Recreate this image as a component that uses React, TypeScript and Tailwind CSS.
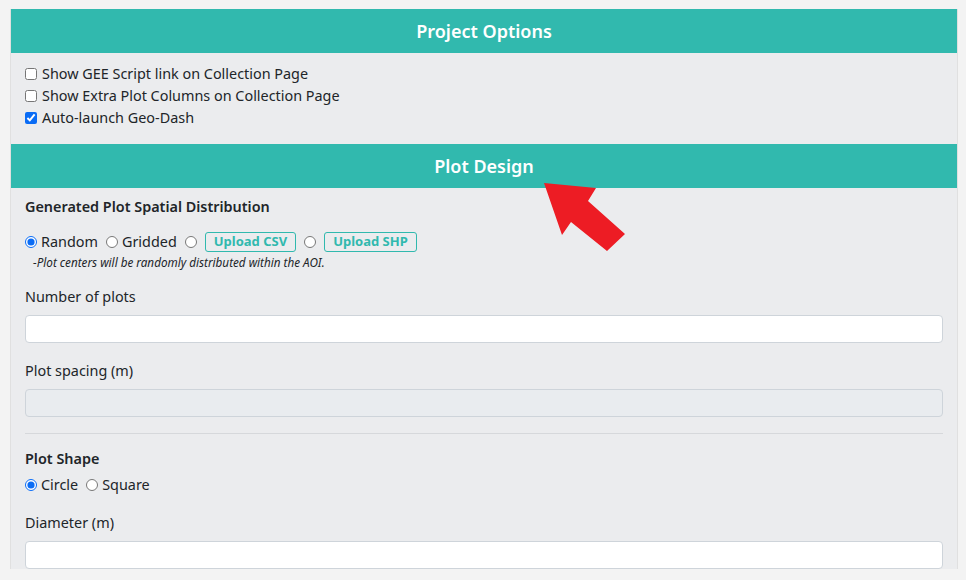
import React from "react";

const font = { fontFamily: '"Noto Sans", "Open Sans", sans-serif' };

function SectionHeader({ title }: { title: string }) {
  return (
    <div className="flex h-[44px] items-center justify-center bg-[#31b9ae] text-[18px] font-semibold text-white">
      {title}
    </div>
  );
}

function Check({ label, checked = false }: { label: string; checked?: boolean }) {
  return (
    <label className="flex h-[22px] items-center gap-[5px]">
      <input type="checkbox" defaultChecked={checked} className="m-0 h-[12px] w-[12px] accent-[#0a6cf5]" />
      <span>{label}</span>
    </label>
  );
}

function Radio({ name, checked = false, children }: { name: string; checked?: boolean; children?: React.ReactNode }) {
  return (
    <label className="flex items-center gap-[4px]">
      <input type="radio" name={name} defaultChecked={checked} className="m-0 h-[12px] w-[12px] accent-[#0a6cf5]" />
      {children}
    </label>
  );
}

function UploadButton({ label }: { label: string }) {
  return (
    <span className="ml-[4px] inline-flex h-[20px] items-center rounded-[3px] border border-[#31b9ae] px-[8px] text-[13px] font-bold text-[#31b9ae]">
      {label}
    </span>
  );
}

export default function App() {
  return (
    <div className="min-h-screen bg-[#f3f3f3] pl-[10px] pr-[8px] pt-[9px] text-[14.4px] text-[#212529]" style={font}>
      <div className="border-x border-[#e0e0e0] bg-[#ebecee]">
        <SectionHeader title="Project Options" />
        <div className="px-[14px] pt-[10px] pb-[15px]">
          <Check label="Show GEE Script link on Collection Page" />
          <Check label="Show Extra Plot Columns on Collection Page" />
          <Check label="Auto-launch Geo-Dash" checked />
        </div>

        <div className="relative">
          <SectionHeader title="Plot Design" />
          {/* annotation arrow */}
          <svg className="pointer-events-none absolute left-[518px] top-[35px]" width="110" height="80" viewBox="530 179 110 80">
            <polygon points="545,183 597,188 589,201 626,234 608,251 572,222 563,235" fill="#ed1c24" />
          </svg>
        </div>

        <div className="px-[14px] pt-[8px]">
          <div className="text-[14.4px] font-semibold leading-[22px]">Generated Plot Spatial Distribution</div>
          <div className="mt-[13px] flex h-[22px] items-center gap-[8px]">
            <Radio name="dist" checked>
              <span>Random</span>
            </Radio>
            <Radio name="dist">
              <span>Gridded</span>
            </Radio>
            <Radio name="dist">
              <UploadButton label="Upload CSV" />
            </Radio>
            <Radio name="dist">
              <UploadButton label="Upload SHP" />
            </Radio>
          </div>
          <div className="ml-[8px] mt-[2px] text-[11.7px] italic leading-[14px]">-Plot centers will be randomly distributed within the AOI.</div>

          <div className="mt-[17px] leading-[22px]">Number of plots</div>
          <input className="mt-[7px] block h-[28px] w-full rounded-[4px] border border-[#ced4da] bg-white" />

          <div className="mt-[17px] leading-[22px]">Plot spacing (m)</div>
          <input disabled className="mt-[7px] block h-[28px] w-full rounded-[4px] border border-[#ced4da] bg-[#e9ecef]" />

          <hr className="mt-[16px] border-t border-[#d6d8db]" />

          <div className="mt-[14px] font-semibold leading-[22px]">Plot Shape</div>
          <div className="mt-[4px] flex h-[22px] items-center gap-[8px]">
            <Radio name="shape" checked>
              <span>Circle</span>
            </Radio>
            <Radio name="shape">
              <span>Square</span>
            </Radio>
          </div>

          <div className="mt-[16px] leading-[22px]">Diameter (m)</div>
          <input className="mt-[7px] block h-[28px] w-full rounded-[4px] border border-[#ced4da] bg-white" />
        </div>
      </div>
    </div>
  );
}
